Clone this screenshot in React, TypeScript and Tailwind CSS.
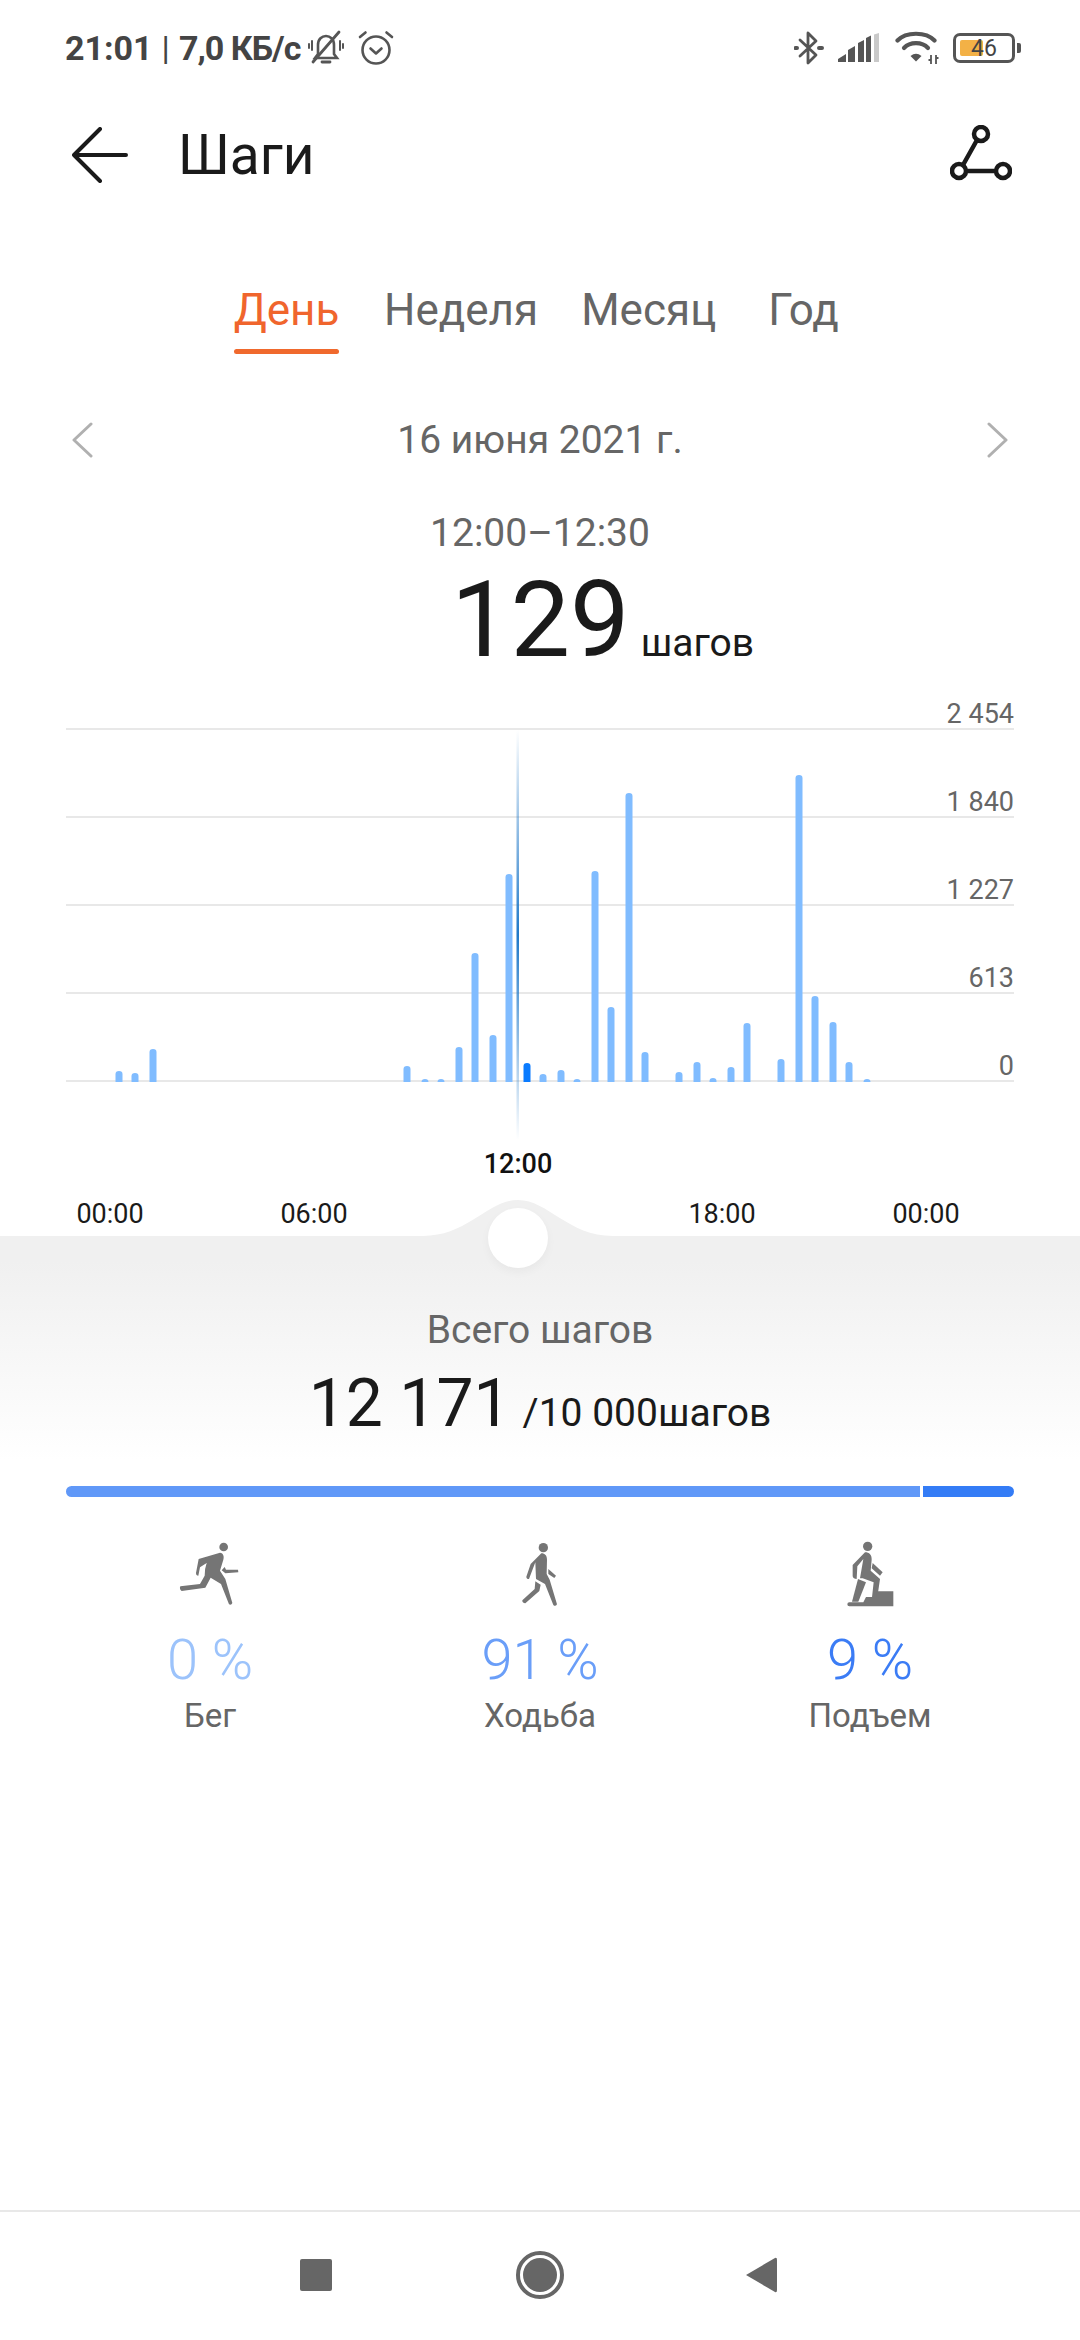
import React from "react";

const bars: [number, number][] = [
  [119, 1071], [135, 1073], [153, 1049], [407, 1066], [425, 1079], [441, 1079], [459, 1047], [475, 953], [493, 1035], [509, 874],
  [543, 1074], [561, 1070], [577, 1079], [595, 871], [611, 1007], [629, 793], [645, 1052], [679, 1072], [697, 1062], [713, 1078],
  [731, 1067], [747, 1023], [781, 1059], [799, 775], [815, 996], [833, 1022], [849, 1062], [867, 1079],
];

function barPath(x: number, top: number) {
  return `M${x - 3.5} 1082 V${top + 3} Q${x - 3.5} ${top} ${x} ${top} Q${x + 3.5} ${top} ${x + 3.5} ${top + 3} V1082 Z`;
}

function BellOff() {
  return (
    <svg width="36" height="36" viewBox="0 0 36 36" fill="none" stroke="#555" strokeWidth="2.6" strokeLinecap="round">
      <path d="M10 24 V15 C10 9 14 6 18 6 C22 6 26 9 26 15 V24 L29 28 H7 L10 24 Z" />
      <path d="M14 32 H22" strokeWidth="2.8" />
      <path d="M5 32 L31 2" strokeWidth="2.8" />
      <path d="M4 11 V20 M1 14 V18 M32 11 V20 M35 14 V18" strokeWidth="2" />
    </svg>
  );
}

function Alarm() {
  return (
    <svg width="36" height="36" viewBox="0 0 36 36" fill="none" stroke="#555" strokeWidth="2.6" strokeLinecap="round" strokeLinejoin="round">
      <circle cx="18" cy="20" r="13.5" />
      <path d="M12.5 18.5 L18 23.5 L23.5 18.5" />
      <path d="M2 7 L7.5 2.5 M34 7 L28.5 2.5" />
    </svg>
  );
}

function Bluetooth() {
  return (
    <svg width="30" height="34" viewBox="0 0 30 34" fill="none" stroke="#555" strokeWidth="2.8" strokeLinecap="round" strokeLinejoin="round">
      <path d="M6 9 L22 24 L14 32 V2 L22 10 L6 25" />
      <path d="M1.5 17 H3 M25 17 H28" strokeWidth="4" />
    </svg>
  );
}

function Signal() {
  return (
    <svg width="41" height="30" viewBox="0 0 41 30">
      <path d="M0 29 V26 L8 21 V29 Z M10 29 V17 L17 13 V29 Z M20 29 V10 L26 7 V29 Z M28 29 V5 L33 2.500 V29 Z" fill="#555" />
      <path d="M36 29 V1.500 L41 0 V29 Z" fill="#c9c9c9" />
    </svg>
  );
}

function Wifi() {
  return (
    <svg width="44" height="34" viewBox="0 0 44 34" fill="none">
      <path d="M2.500 9.500 C11 0.500 31 0.500 39.500 9.500" stroke="#555" strokeWidth="4.200" strokeLinecap="round" />
      <path d="M9 17 C15 10.500 27 10.500 33 17" stroke="#555" strokeWidth="4.200" strokeLinecap="round" />
      <path d="M15.500 25 Q21 20.500 26.500 25 L21 30.500 Z" fill="#555" />
      <path d="M36 24 V33 M36 29 L33.500 29 M41 24 V33 M41 27 L43.500 27" stroke="#555" strokeWidth="1.800" />
    </svg>
  );
}

function Battery() {
  return (
    <div className="flex items-center">
      <div className="relative flex h-[30px] w-[62px] items-center justify-center rounded-[7px] border-[3.5px] border-[#555]">
        <div className="absolute left-[3.5px] top-[3.5px] h-[16px] w-[23px] rounded-[2px] bg-[#f3b146]" />
        <span className="relative text-[23px] leading-none text-[#444]">46</span>
      </div>
      <div className="ml-[2px] h-[10px] w-[4px] rounded-r-[2px] bg-[#555]" />
    </div>
  );
}

function Runner() {
  return (
    <svg width="80" height="90" viewBox="0 0 240 270" fill="#757575">
      <circle cx="161" cy="54" r="13" />
      <path d="M150 71 C160 72 163 82 160 92 L150 125 L166 150 L187 222 Q184 230 177 226 L153 165 L122 146 L106 176 L35 186 Q27 180 31 172 L90 165 L104 140 Q103 122 110 102 L90 115 L85 140 Q78 140 78 132 L86 90 Z" />
      <path d="M164 114 L168 122 L204 122 L205 130 L166 133 L155 124 Z" />
    </svg>
  );
}

function Walker() {
  return (
    <svg width="80" height="90" viewBox="0 0 240 270" fill="#757575">
      <circle cx="130" cy="56" r="14" />
      <path d="M124 73 C135 73 141 80 141 92 L140 135 L149 152 L171 226 Q166 234 160 228 L135 165 L108 150 L106 100 L87 150 Q79 150 79 143 L92 105 Z" />
      <path d="M145 120 L168 140 L163 147 L145 135 Z" />
      <path d="M106 157 L122 167 L118 186 L76 223 Q66 222 67 214 L104 180 Z" />
    </svg>
  );
}

function Climber() {
  return (
    <svg width="80" height="90" viewBox="0 0 240 270" fill="#757575">
      <circle cx="113" cy="52" r="14" />
      <path d="M105 70 C118 70 126 78 125 92 L122 125 L150 150 L142 205 L126 205 L131 160 L98 148 L90 148 L100 90 L82 112 L80 150 Q70 150 68 142 L68 108 Z" />
      <path d="M128 102 L158 130 L150 140 L125 118 Z" />
      <path d="M84 150 L108 160 L85 218 L66 218 Z" />
      <path d="M140 187 H190 V232 H58 Q52 232 52 226 Q52 220 58 220 H100 L108 204 H140 Z" />
    </svg>
  );
}

function Stat({ icon, value, color, label }: { icon: React.ReactNode; value: string; color: string; label: string }) {
  return (
    <div className="flex flex-col items-center">
      <div className="h-[90px]">{icon}</div>
      <div className={`mt-[11px] text-[56px] font-light leading-[60px] ${color}`}>{value}</div>
      <div className="mt-[6px] text-[33px] leading-[40px] text-[#666]">{label}</div>
    </div>
  );
}

export default function App() {
  return (
    <div className="flex h-[2340px] w-[1080px] flex-col overflow-hidden bg-white font-['Roboto',sans-serif]">
      <div className="flex h-[96px] shrink-0 items-center justify-between pl-[65px] pr-[59px]">
        <div className="flex items-center text-[34px] font-bold text-[#444]">
          <span>21:01</span>
          <span className="mx-[9px] font-normal">|</span>
          <span className="tracking-[-1px]">7,0 КБ/с</span>
          <div className="ml-[8px] flex items-center gap-[14px]">
            <BellOff />
            <Alarm />
          </div>
        </div>
        <div className="flex items-center">
          <Bluetooth />
          <div className="ml-[14px]"><Signal /></div>
          <div className="ml-[16px]"><Wifi /></div>
          <div className="ml-[14px]"><Battery /></div>
        </div>
      </div>

      <div className="flex h-[118px] shrink-0 items-center justify-between pl-[72px] pr-[68px]">
        <div className="flex items-center">
          <svg width="56" height="56" viewBox="0 0 56 56" fill="none" stroke="#1a1a1a" strokeWidth="4" strokeLinecap="round" strokeLinejoin="round">
            <path d="M28 2 L2 28 L28 54 M2 28 H54" />
          </svg>
          <div className="ml-[50px] text-[55px] leading-[60px] text-[#1a1a1a]">Шаги</div>
        </div>
        <svg className="mb-[2px]" width="62" height="58" viewBox="0 0 62 58" fill="none" stroke="#1a1a1a" strokeWidth="4.500">
          <circle cx="31" cy="9" r="7" />
          <circle cx="9" cy="46" r="7" />
          <circle cx="53" cy="46" r="7" />
          <path d="M27 15 L13 40 M16 46 H46" />
        </svg>
      </div>

      <div className="mt-[66px] flex shrink-0 pl-[234px] text-[44px] leading-[60px] text-[#666]">
        <div className="flex w-[105px] flex-col items-center">
          <span className="whitespace-nowrap text-[#f0652d]">День</span>
          <div className="mt-[9px] h-[5px] w-full rounded-full bg-[#f0692d]" />
        </div>
        <span className="ml-[45px]">Неделя</span>
        <span className="ml-[43px]">Месяц</span>
        <span className="ml-[52px]">Год</span>
      </div>

      <div className="mt-[56px] flex h-[60px] shrink-0 items-center justify-between px-[72px]">
        <svg width="21" height="36" viewBox="0 0 21 36" fill="none" stroke="#b0b0b0" strokeWidth="3" strokeLinecap="round" strokeLinejoin="round">
          <path d="M19 2 L2 18 L19 34" />
        </svg>
        <div className="text-[39px] leading-[60px] text-[#666]">16 июня 2021 г.</div>
        <svg width="21" height="36" viewBox="0 0 21 36" fill="none" stroke="#b0b0b0" strokeWidth="3" strokeLinecap="round" strokeLinejoin="round">
          <path d="M2 2 L19 18 L2 34" />
        </svg>
      </div>

      <div className="mt-[38px] shrink-0 text-center text-[39px] leading-[50px] text-[#666]">12:00–12:30</div>

      <div className="mt-[20px] flex h-[98px] shrink-0 items-baseline justify-center pl-[125px]">
        <span className="text-[106px] leading-[84px] text-[#1a1a1a]">129</span>
        <span className="ml-[11px] text-[39px] text-[#1a1a1a]">шагов</span>
      </div>

      <div className="relative shrink-0 px-[66px]">
        {["2 454", "1 840", "1 227", "613", "0"].map((v, i) => (
          <div
            key={v}
            className={`flex items-end justify-end border-b-2 border-[#e8e8e8] text-[27px] leading-[28px] text-[#666] ${i === 0 ? "h-[54px]" : "h-[88px]"}`}
          >
            {v}
          </div>
        ))}
        <svg className="absolute left-0 top-0" width="1080" height="508" viewBox="0 676 1080 508">
          <defs>
            <linearGradient id="cursor" x1="0" y1="0" x2="0" y2="1">
              <stop offset="0" stopColor="#1f78c8" stopOpacity="0" />
              <stop offset="0.5" stopColor="#1f78c8" stopOpacity="1" />
              <stop offset="1" stopColor="#1f78c8" stopOpacity="0" />
            </linearGradient>
          </defs>
          {bars.map(([x, t]) => (
            <path key={x} d={barPath(x, t)} fill="#80bcff" />
          ))}
          <path d={barPath(527, 1063)} fill="#0a7bff" />
          <rect x="516.500" y="730" width="2.500" height="410" fill="url(#cursor)" />
        </svg>
      </div>

      <div className="mt-[64px] shrink-0 pr-[44px] text-center text-[27px] font-medium leading-[36px] text-[#111]">12:00</div>
      <div className="mt-[14px] grid w-[1028px] shrink-0 grid-cols-5 pl-[8px] text-[27px] leading-[36px] text-[#1a1a1a]">
        <div className="text-center">00:00</div>
        <div className="text-center">06:00</div>
        <div />
        <div className="text-center">18:00</div>
        <div className="text-center">00:00</div>
      </div>

      <div className="relative mt-[4px] flex h-[250px] shrink-0 flex-col items-center bg-gradient-to-b from-[#f0f0f0] from-10% to-white to-90%">
        <svg className="absolute left-[423px] top-[-37px]" width="190" height="38" viewBox="0 0 190 38">
          <path d="M0 37 C45 37 65 1 95 1 C125 1 145 37 190 37 V38 H0 Z" fill="#f0f0f0" />
        </svg>
        <div className="absolute left-[488px] top-[-28px] h-[60px] w-[60px] rounded-full bg-white shadow-[0_4px_10px_rgba(0,0,0,0.04)]" />
        <div className="mt-[72px] text-[39px] leading-[44px] text-[#666]">Всего шагов</div>
        <div className="mt-[14px] flex items-baseline">
          <span className="text-[66px] leading-[76px] text-[#1a1a1a]">12 171</span>
          <span className="ml-[12px] text-[39px] text-[#1a1a1a]">/10 000шагов</span>
        </div>
      </div>

      <div className="flex h-[11px] w-[948px] shrink-0 self-center overflow-hidden rounded-full">
        <div className="w-[854px] bg-[#6098f8]" />
        <div className="w-[3px] bg-white" />
        <div className="flex-1 bg-[#347cf6]" />
      </div>

      <div className="mt-[32px] grid w-[1035px] shrink-0 grid-cols-3 self-start pl-[45px]">
        <Stat icon={<Runner />} value="0 %" color="text-[#9cc3fb]" label="Бег" />
        <Stat icon={<Walker />} value="91 %" color="text-[#6a9ef8]" label="Ходьба" />
        <Stat icon={<Climber />} value="9 %" color="text-[#3b7cf5]" label="Подъем" />
      </div>

      <div className="flex-1" />

      <div className="flex h-[130px] shrink-0 items-start border-t-2 border-[#e8e8e8] pl-[300px] pt-[39px]">
        <div className="mt-[8px] h-[32px] w-[32px] rounded-[2px] bg-[#666]" />
        <div className="ml-[184px] flex h-[48px] w-[48px] items-center justify-center rounded-full border-[4px] border-[#666]">
          <div className="h-[34px] w-[34px] rounded-full bg-[#666]" />
        </div>
        <svg className="ml-[181px] mt-[6px]" width="32" height="36" viewBox="0 0 32 36">
          <path d="M1 18 L30 1 Q32 0 32 3 V33 Q32 36 30 35 Z" fill="#666" />
        </svg>
      </div>
    </div>
  );
}
